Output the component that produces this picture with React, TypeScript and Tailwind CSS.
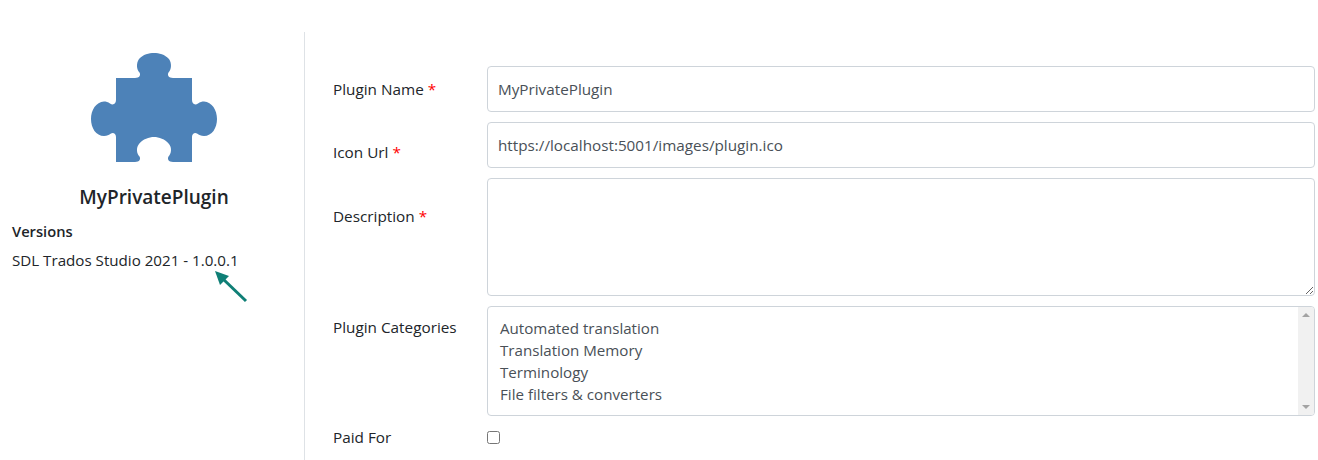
const font = "font-['Open_Sans','Noto_Sans',sans-serif]";

function PuzzleIcon() {
  return (
    <svg viewBox="70 40 170 135" width="170" height="135" className="block">
      <path
        fill="#4d82b8"
        d="M116 78 L135 78 C139.5 78 141 75 139.5 72.5 C136.5 69.5 136 63.5 139 59 C143 54.5 149 53 154 53 C159 53 165 54.5 169 59 C172 63.5 171.5 69.5 168.5 72.5 C167 75 168.5 78 173 78 L192 78 L192 100 C192 104 195 105.5 198 103.5 C200 102 202 101.5 204 101.5 C212 102 217 110 217 119 C217 128 212 136 204 136 C201 136 199 135 197 133.5 C195 132 192 133.5 192 137 L192 162 L173 162 C168.5 162 167 159 168.5 156.5 C171.5 153.5 172 147.5 169 144 C165 139 159 137 154 137 C149 137 143 139 139 144 C136 147.5 136.5 153.5 139.5 156.5 C141 159 139.5 162 135 162 L116 162 L116 137 C116 133.5 113 132 111 133.5 C109 135 107 136 104 136 C96 136 91 128 91 119 C91 110 96 102 104 101.5 C106 101.5 108 102 110 103.5 C113 105.5 116 104 116 100 Z"
      />
    </svg>
  );
}

function Arrow() {
  return (
    <svg width="40" height="40" viewBox="0 0 40 40" className="absolute left-[210px] top-[266px]">
      <path d="M36 35 L12 12" stroke="#0f7f76" strokeWidth="3" fill="none" />
      <path d="M5 5 L19 10 L10 19 Z" fill="#0f7f76" />
    </svg>
  );
}

function Label({ text, required, pad }: { text: string; required?: boolean; pad: string }) {
  return (
    <label className={`w-[154px] shrink-0 text-[15.3px] leading-6 text-[#212529] ${pad}`}>
      {text}
      {required && <span className="text-[#ff0000]"> *</span>}
    </label>
  );
}

const inputCls =
  "block w-full rounded border border-[#ced4da] bg-white px-[10px] text-[15.25px] text-[#495057] outline-none";

export default function App() {
  return (
    <div className={`relative flex h-[460px] overflow-hidden bg-white pt-8 ${font}`}>
      <div className="w-[305px] shrink-0 border-r border-[#dee2e6] pl-3 pr-2 pt-2">
        <div className="flex justify-center pl-[2px]">
          <PuzzleIcon />
        </div>
        <h4 className="mt-[8px] text-center text-[19px] leading-7 font-semibold text-[#212529]">MyPrivatePlugin</h4>
        <div className="mt-[8px] text-[14.7px] leading-6 font-semibold text-[#212529]">Versions</div>
        <div className="mt-[5px] text-[15.15px] leading-6 text-[#212529]">SDL Trados Studio 2021 - 1.0.0.1</div>
      </div>
      <Arrow />
      <div className="flex flex-1 flex-col gap-[10px] pl-7 pr-[3px] pt-[34px]">
        <div className="flex">
          <Label text="Plugin Name" required pad="pt-[11px]" />
          <input className={`${inputCls} h-[46px]`} defaultValue="MyPrivatePlugin" />
        </div>
        <div className="flex">
          <Label text="Icon Url" required pad="pt-[18px]" />
          <input className={`${inputCls} h-[46px]`} defaultValue="https://localhost:5001/images/plugin.ico" />
        </div>
        <div className="flex">
          <Label text="Description" required pad="pt-[26px]" />
          <textarea className={`${inputCls} h-[118px]`} />
        </div>
        <div className="flex">
          <Label text="Plugin Categories" pad="pt-[9px]" />
          <div className="flex h-[110px] flex-1 overflow-hidden rounded border border-[#ced4da] bg-white">
            <div className="flex-1 pl-3 pt-[10px] text-[15.15px] leading-[22px] text-[#495057]">
              <div>Automated translation</div>
              <div>Translation Memory</div>
              <div>Terminology</div>
              <div>File filters &amp; converters</div>
            </div>
            <div className="flex w-4 flex-col items-center justify-between bg-[#f1f1f1] py-[6px]">
              <svg width="8" height="4" viewBox="0 0 8 4"><path d="M4 0 L8 4 L0 4 Z" fill="#a3a3a3" /></svg>
              <svg width="8" height="4" viewBox="0 0 8 4"><path d="M0 0 L8 0 L4 4 Z" fill="#a3a3a3" /></svg>
            </div>
          </div>
        </div>
        <div className="flex items-start">
          <Label text="Paid For" pad="-mt-[1px]" />
          <input type="checkbox" className="mt-[5px] h-[13px] w-[13px] accent-[#495057]" />
        </div>
      </div>
    </div>
  );
}
